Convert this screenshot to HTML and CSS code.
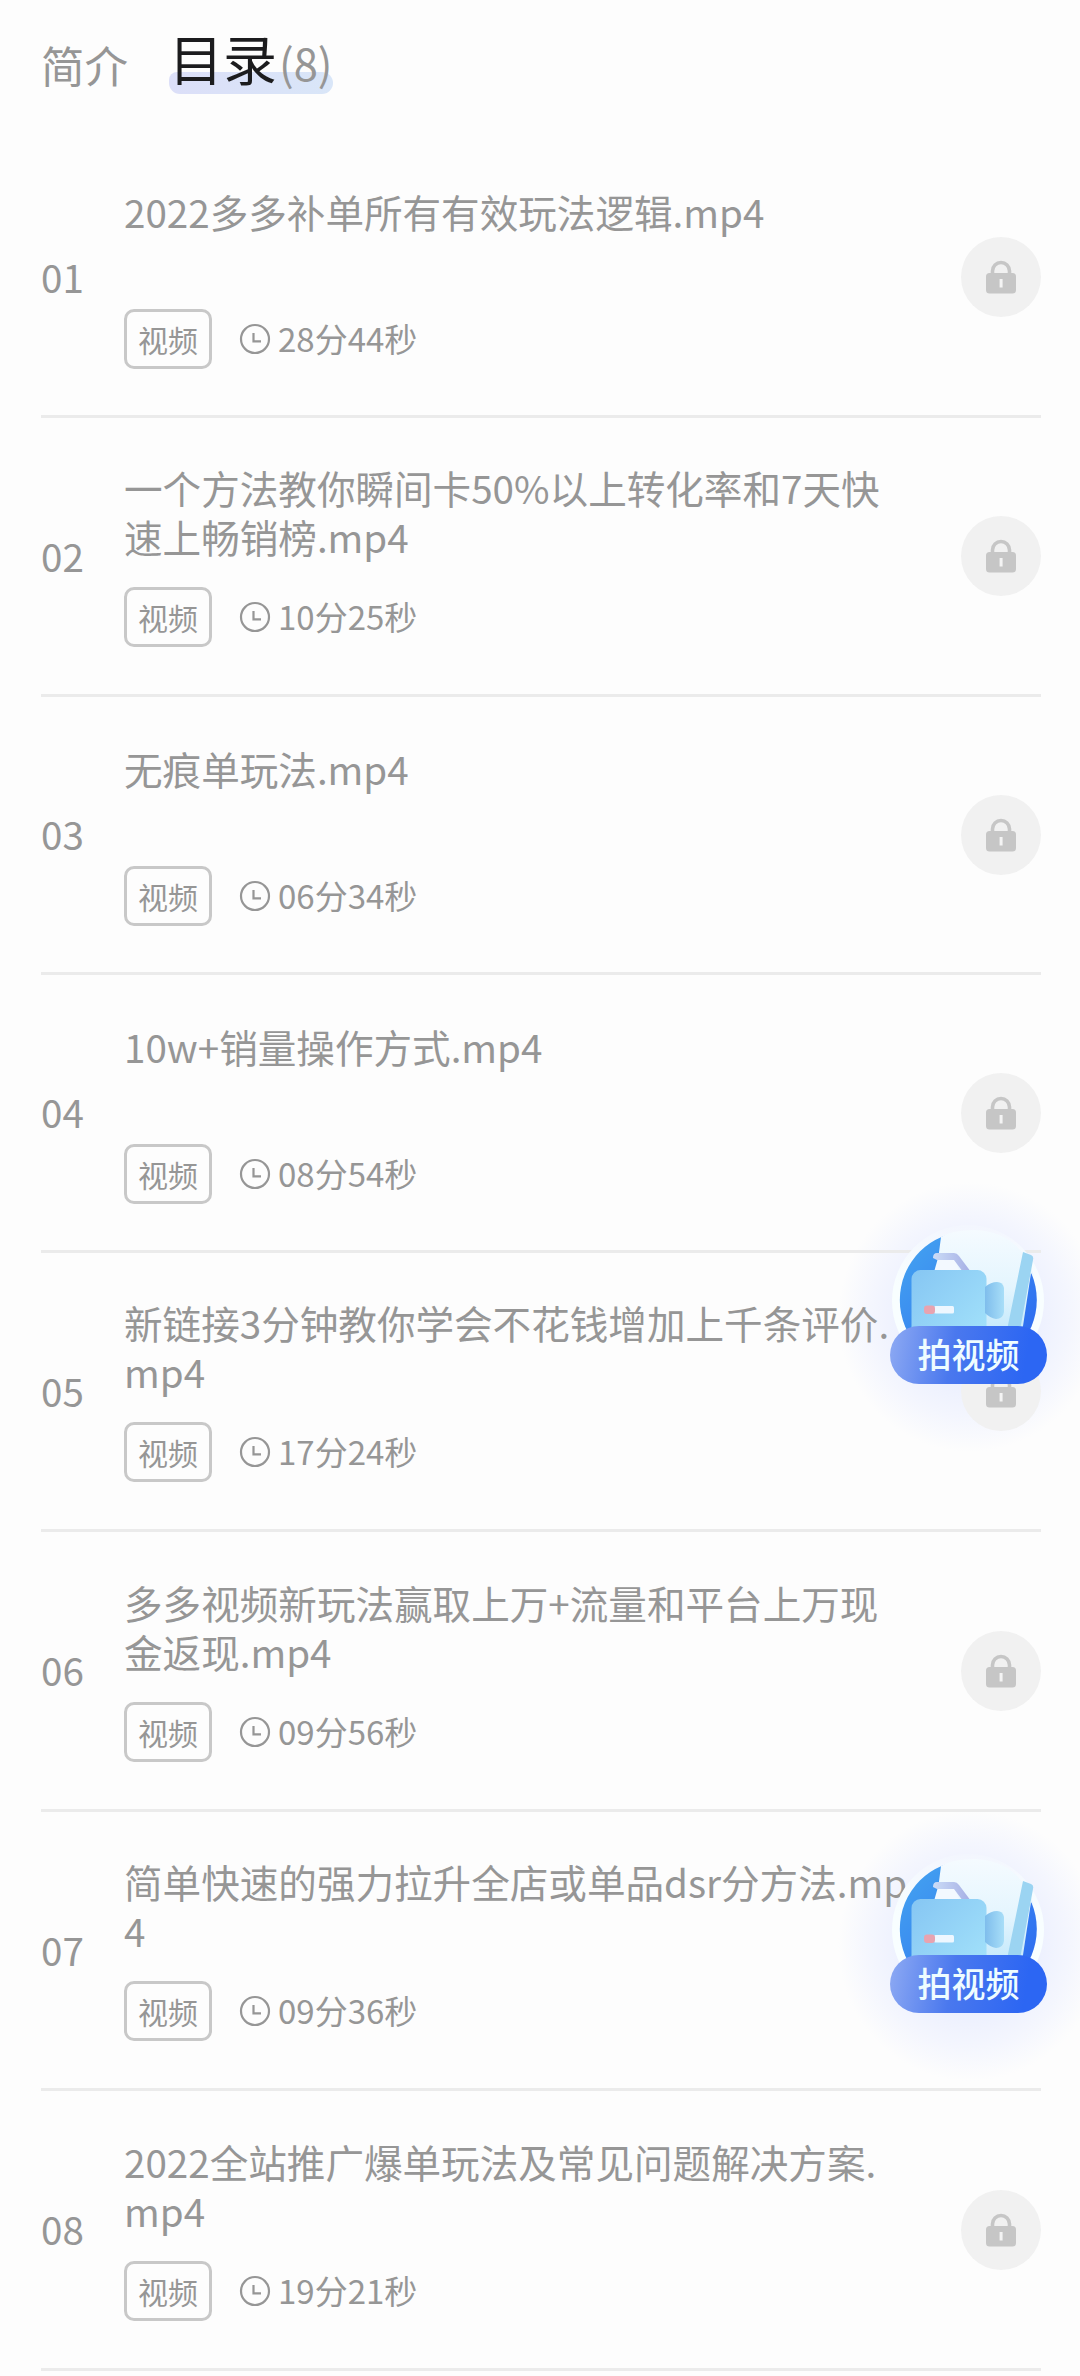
FILE: index.html
```html
<!DOCTYPE html>
<html lang="zh-CN">
<head>
<meta charset="utf-8">
<title>目录</title>
<link rel="stylesheet" href="styles.css">
</head>
<body>
<svg class="defs" width="0" height="0" aria-hidden="true">
  <defs>
    <linearGradient id="disc" x1="0" y1="0" x2="1" y2="1"><stop offset="0" stop-color="#45a6f0"/><stop offset="1" stop-color="#2a63f0"/></linearGradient>
    <linearGradient id="beam" x1="0" y1="0" x2="0" y2="1"><stop offset="0" stop-color="#f5fbff"/><stop offset=".5" stop-color="#e4f5fe"/><stop offset="1" stop-color="#b9e5fa"/></linearGradient>
    <linearGradient id="body" x1="0" y1="0" x2="1" y2="1"><stop offset="0" stop-color="#86c6f3"/><stop offset="1" stop-color="#a5e4fb"/></linearGradient>
    <linearGradient id="lens" x1="0" y1="0" x2="1" y2="0"><stop offset="0" stop-color="#7fbdec"/><stop offset="1" stop-color="#a8def8"/></linearGradient>
    <linearGradient id="handle" x1="0" y1="0" x2="1" y2="0"><stop offset="0" stop-color="#cbdcf7"/><stop offset="1" stop-color="#a5aee4"/></linearGradient>
    <linearGradient id="rim" x1="0" y1="0" x2="0" y2="1"><stop offset="0" stop-color="#f3f6fe"/><stop offset=".4" stop-color="#f8feff"/></linearGradient>
  </defs>
  <symbol id="clock" viewBox="0 0 32 32">
    <circle cx="16" cy="16" r="14" fill="none" stroke="#969696" stroke-width="2.2"/>
    <path d="M14.5 10v8.3h7.5" fill="none" stroke="#969696" stroke-width="2.2"/>
  </symbol>
  <symbol id="lock" viewBox="0 0 30 34">
    <path d="M6.5 15V11a8.5 8.5 0 0 1 17 0v4" fill="none" stroke="#c6c6c6" stroke-width="3.6"/>
    <rect x="0" y="13" width="30" height="20.5" rx="3.5" fill="#c6c6c6"/>
    <rect x="13.6" y="19" width="3" height="8.5" fill="#f4f4f4"/>
  </symbol>
  <symbol id="camera" viewBox="0 -14 157 124">
    <circle cx="78" cy="65" r="76" fill="url(#rim)"/>
    <circle cx="78.3" cy="64" r="68.5" fill="url(#disc)"/>
    <path d="M51 1Q62-6 85-6Q130-4 144 40L141 37L130 110H34L48 24Z" fill="url(#beam)"/>
    <path d="M44 36L48 22H64L70 36Z" fill="#f3f9ff"/>
    <path d="M43 22q0-5 4-5h17q3 0 5 3l12 16h-8l-9-12H47z" fill="url(#handle)"/>
    <rect x="21.500" y="34" width="75" height="80" rx="9" fill="url(#body)"/>
    <path d="M95 51q6-5 12-5q6 0 7 6v24q-1 7-8 7q-6-1-11-6z" fill="url(#lens)"/>
    <path d="M133 16l8 3q3 1 2 5L130 94H117Z" fill="#9bd4f2"/>
    <rect x="44" y="70" width="20" height="7.500" rx="1.500" fill="#eef7ff"/>
    <rect x="34" y="69.500" width="11" height="8.500" rx="3" fill="#e8a3b0"/>
  </symbol>
</svg>
<main class="page">
  <nav class="tabs">
    <span class="tab">简介</span>
    <span class="tab-active"><b class="name">目录</b><span class="count">(8)</span></span>
  </nav>
  <ol class="lessons">
    <li class="lesson">
      <span class="index">01</span>
      <div class="info"><h2 class="title">2022多多补单所有有效玩法逻辑.mp4</h2>
        <div class="meta"><span class="tag">视频</span><svg class="clock"><use href="#clock"/></svg><span class="time">28分44秒</span></div></div>
      <span class="lock"><svg><use href="#lock"/></svg></span>
    </li>
    <li class="lesson">
      <span class="index">02</span>
      <div class="info two-line"><h2 class="title">一个方法教你瞬间卡50%以上转化率和7天快<br>速上畅销榜.mp4</h2>
        <div class="meta"><span class="tag">视频</span><svg class="clock"><use href="#clock"/></svg><span class="time">10分25秒</span></div></div>
      <span class="lock"><svg><use href="#lock"/></svg></span>
    </li>
    <li class="lesson">
      <span class="index">03</span>
      <div class="info"><h2 class="title">无痕单玩法.mp4</h2>
        <div class="meta"><span class="tag">视频</span><svg class="clock"><use href="#clock"/></svg><span class="time">06分34秒</span></div></div>
      <span class="lock"><svg><use href="#lock"/></svg></span>
    </li>
    <li class="lesson">
      <span class="index">04</span>
      <div class="info"><h2 class="title">10w+销量操作方式.mp4</h2>
        <div class="meta"><span class="tag">视频</span><svg class="clock"><use href="#clock"/></svg><span class="time">08分54秒</span></div></div>
      <span class="lock"><svg><use href="#lock"/></svg></span>
    </li>
    <li class="lesson">
      <span class="index">05</span>
      <div class="info two-line"><h2 class="title">新链接3分钟教你学会不花钱增加上千条评价.<br>mp4</h2>
        <div class="meta"><span class="tag">视频</span><svg class="clock"><use href="#clock"/></svg><span class="time">17分24秒</span></div></div>
      <span class="lock"><svg><use href="#lock"/></svg></span>
    </li>
    <li class="lesson">
      <span class="index">06</span>
      <div class="info two-line"><h2 class="title">多多视频新玩法赢取上万+流量和平台上万现<br>金返现.mp4</h2>
        <div class="meta"><span class="tag">视频</span><svg class="clock"><use href="#clock"/></svg><span class="time">09分56秒</span></div></div>
      <span class="lock"><svg><use href="#lock"/></svg></span>
    </li>
    <li class="lesson">
      <span class="index">07</span>
      <div class="info two-line"><h2 class="title">简单快速的强力拉升全店或单品dsr分方法.mp<br>4</h2>
        <div class="meta"><span class="tag">视频</span><svg class="clock"><use href="#clock"/></svg><span class="time">09分36秒</span></div></div>
    </li>
    <li class="lesson">
      <span class="index">08</span>
      <div class="info two-line"><h2 class="title">2022全站推广爆单玩法及常见问题解决方案.<br>mp4</h2>
        <div class="meta"><span class="tag">视频</span><svg class="clock"><use href="#clock"/></svg><span class="time">19分21秒</span></div></div>
      <span class="lock"><svg><use href="#lock"/></svg></span>
    </li>
  </ol>
  <div class="shoot shoot-first"><svg class="camera"><use href="#camera"/></svg><span class="shoot-label">拍视频</span></div>
  <div class="shoot shoot-second"><svg class="camera"><use href="#camera"/></svg><span class="shoot-label">拍视频</span></div>
</main>
</body>
</html>
```

FILE: styles.css
```css
* { box-sizing: border-box; }
body {
  margin: 0;
  background: #fdfdfd;
  color: #969696;
  font-family: "Noto Sans CJK SC", sans-serif;
}
.defs { position: absolute; }
.page {
  position: relative;
  width: 1080px;
  height: 2376px;
  overflow: hidden;
  padding: 0 39px 0 41px;
}
.tabs {
  display: flex;
  align-items: flex-start;
  height: 139px;
  gap: 41px;
  font-size: 43.5px;
  line-height: 64px;
}
.tab { padding-top: 33px; }
.tab-active {
  position: relative;
  display: flex;
  align-items: baseline;
  height: 64px;
  margin-top: 26px;
}
.tab-active::before {
  content: "";
  position: absolute;
  z-index: -1;
  left: 0;
  top: 46px;
  width: 164px;
  height: 22px;
  border-radius: 8px 11px 11px 11px;
  background: linear-gradient(90deg, #dcdff8, #d9e6f8);
}
.name {
  color: #1c1c1e;
  font-size: 54px;
  font-weight: 400;
}
.count { margin-left: 2px; }
.lessons { margin: 0; padding: 0; list-style: none; }
.lesson {
  display: flex;
  align-items: center;
  height: 279px;
  border-bottom: 3px solid #ebebeb;
}
.lesson:nth-child(3), .lesson:nth-child(4) { height: 278px; }
.lesson:nth-child(6), .lesson:nth-child(8) { height: 280px; }
.index { width: 83px; font-size: 38.6px; line-height: 56px; padding-bottom: 3px; }
.info {
  flex: 1;
  align-self: flex-end;
  display: flex;
  flex-direction: column;
  justify-content: space-between;
  height: 182px;
  margin-bottom: 46px;
}
.title {
  margin: 0;
  font-size: 38.6px;
  font-weight: 400;
  line-height: 49px;
  white-space: nowrap;
}
.two-line { height: 184px; margin-bottom: 47px; }
.meta { display: flex; align-items: center; }
.tag {
  width: 88px;
  height: 60px;
  border: 3px solid #c8c8c8;
  border-radius: 10px;
  font-size: 30px;
  line-height: 54px;
  text-align: center;
}
.clock { width: 32px; height: 32px; margin: 0 7px 0 27px; }
.time { font-size: 33px; line-height: 48px; margin-top: -3px; }
.lock {
  display: grid;
  place-items: center;
  width: 80px;
  height: 80px;
  border-radius: 50%;
  background: #f1f1f1;
}
.lock svg { width: 30px; height: 34px; }
.shoot {
  position: absolute;
  left: 890px;
  display: flex;
  flex-direction: column;
  align-items: center;
  width: 157px;
}
.shoot::before {
  content: "";
  position: absolute;
  z-index: -1;
  left: -52px;
  top: -40px;
  width: 264px;
  height: 270px;
  background: radial-gradient(closest-side, #ebeffe 45%, #f4f6fe 75%, #fdfdfd00);
}
.shoot-first { top: 1222px; }
.shoot-second { top: 1851px; }
.camera { width: 157px; height: 124px; }
.shoot-label {
  position: relative;
  width: 157px;
  height: 58px;
  margin-top: -20px;
  border-radius: 29px;
  background: linear-gradient(100deg, #8eaaf3, #4a78ee 40%, #2c66f3 85%);
  color: #eefcff;
  font-size: 34px;
  font-weight: 500;
  line-height: 56px;
  text-align: center;
}
```
